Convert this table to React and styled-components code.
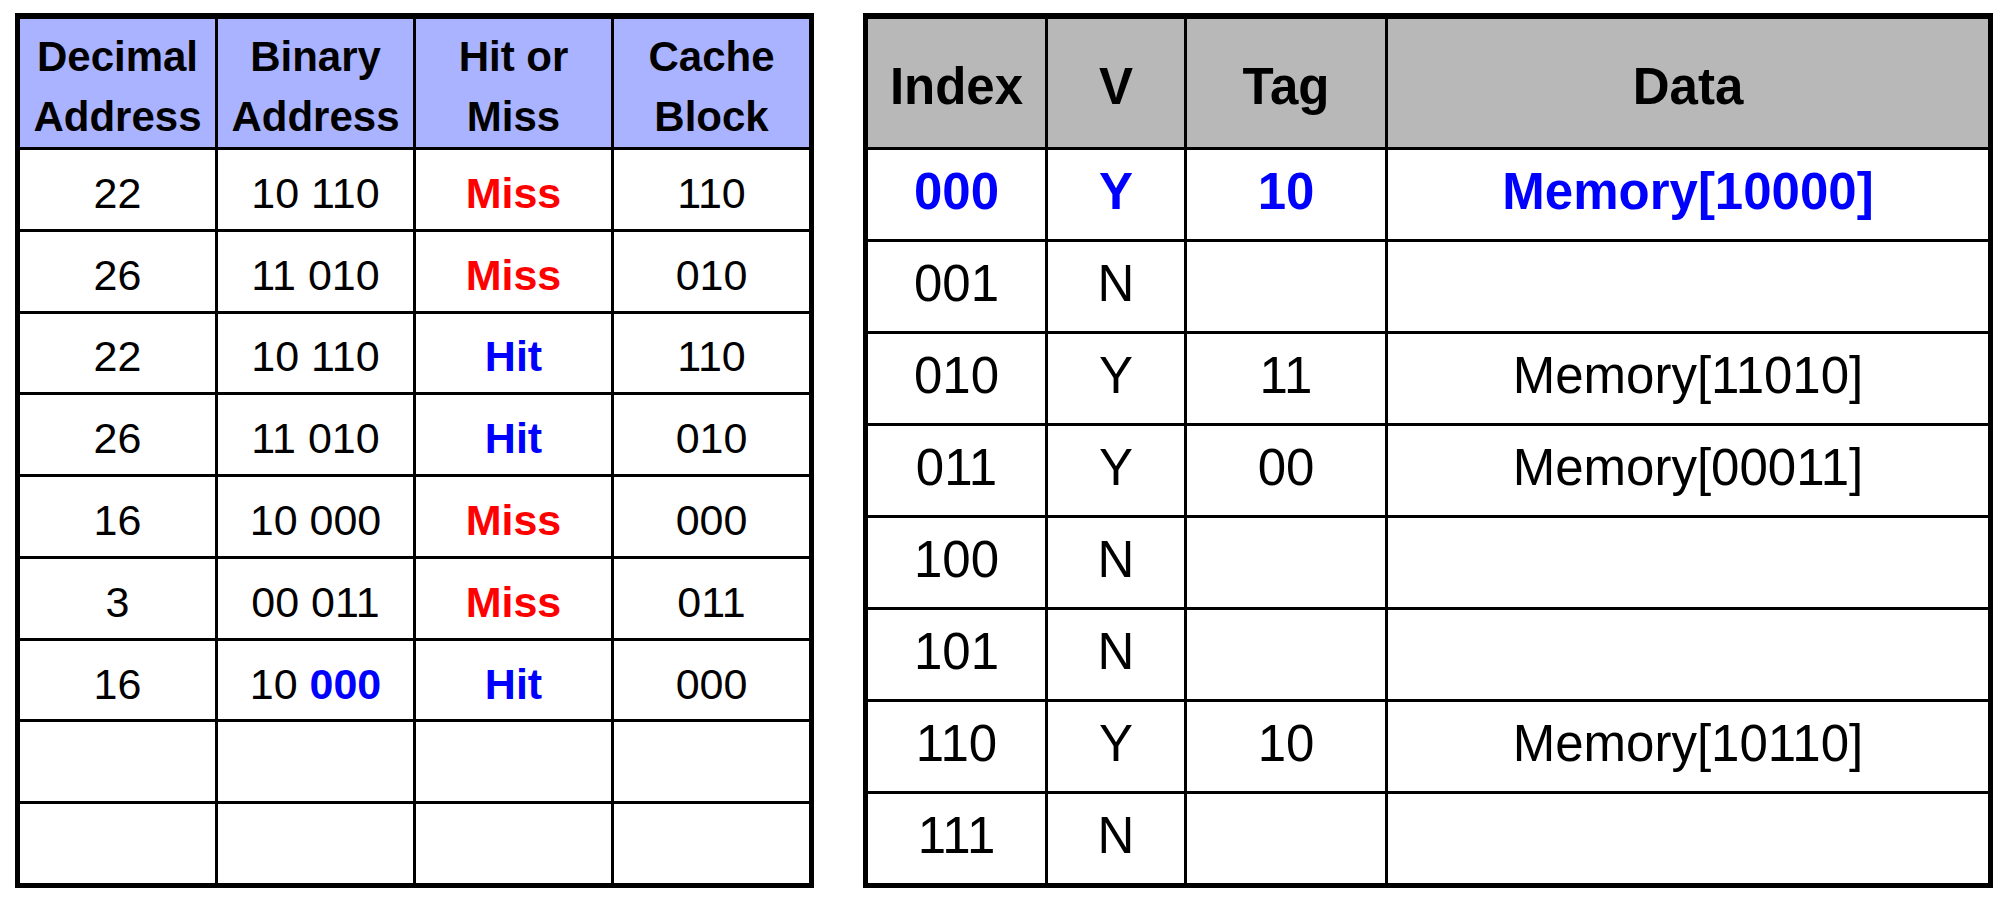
import React from "react";
import styled, { createGlobalStyle } from "styled-components";

const GlobalStyle = createGlobalStyle`
  html, body {
    margin: 0;
    padding: 0;
    background: #ffffff;
    font-family: "Liberation Sans", Arial, sans-serif;
  }
`;

const Page = styled.main`
  display: flex;
  align-items: flex-start;
  gap: 49px;
  padding: 13px 0 0 15px;
`;

const Grid = styled.div`
  display: grid;
  grid-template-columns: ${(p) => p.$cols};
  grid-template-rows: 128px repeat(${(p) => p.$rowCount}, 1fr);
  gap: 3px;
  width: ${(p) => p.$width}px;
  height: 875px;
  box-sizing: border-box;
  border: 5px solid #000;
  border-top-width: 6px;
  background: #000;
`;

const HeadCell = styled.div`
  display: flex;
  align-items: center;
  justify-content: center;
  text-align: center;
  background: ${(p) => p.$bg};
  color: #000;
  font-weight: 700;
  font-size: ${(p) => p.$size}px;
  line-height: ${(p) => p.$lh}px;
  padding-top: ${(p) => p.$shift || 0}px;
  box-sizing: border-box;
`;

const Cell = styled.div`
  display: flex;
  align-items: center;
  justify-content: center;
  background: #fff;
  color: ${(p) => p.$color || "#000"};
  font-weight: ${(p) => (p.$bold ? 700 : 400)};
  font-size: ${(p) => p.$size}px;
  white-space: pre;
  padding-top: ${(p) => p.$padTop || 0}px;
  padding-bottom: ${(p) => p.$padBottom || 0}px;
  box-sizing: border-box;
`;

const Accent = styled.span`
  color: #0000ff;
  font-weight: 700;
`;

const RED = "#ff0000";
const BLUE = "#0000ff";

const accessRows = [
  { dec: "22", bin: "10 110", res: "Miss", block: "110" },
  { dec: "26", bin: "11 010", res: "Miss", block: "010" },
  { dec: "22", bin: "10 110", res: "Hit", block: "110" },
  { dec: "26", bin: "11 010", res: "Hit", block: "010" },
  { dec: "16", bin: "10 000", res: "Miss", block: "000" },
  { dec: "3", bin: "00 011", res: "Miss", block: "011" },
  { dec: "16", bin: ["10 ", "000"], res: "Hit", block: "000" },
  null,
  null,
];

const cacheRows = [
  { idx: "000", v: "Y", tag: "10", data: "Memory[10000]", hl: true },
  { idx: "001", v: "N", tag: "", data: "" },
  { idx: "010", v: "Y", tag: "11", data: "Memory[11010]" },
  { idx: "011", v: "Y", tag: "00", data: "Memory[00011]" },
  { idx: "100", v: "N", tag: "", data: "" },
  { idx: "101", v: "N", tag: "", data: "" },
  { idx: "110", v: "Y", tag: "10", data: "Memory[10110]" },
  { idx: "111", v: "N", tag: "", data: "" },
];

const LEFT_HEAD_SIZE = 42;
const LEFT_SIZE = 43;
const RIGHT_SIZE = 51;

function AccessTable() {
  const heads = [
    ["Decimal", "Address"],
    ["Binary", "Address"],
    ["Hit or", "Miss"],
    ["Cache", "Block"],
  ];
  return (
    <Grid $cols="repeat(4, 1fr)" $rowCount={9} $width={799}>
      {heads.map((h, i) => (
        <HeadCell key={i} $bg="#aab3ff" $size={LEFT_HEAD_SIZE} $lh={60} $shift={7}>
          {h[0]}
          <br />
          {h[1]}
        </HeadCell>
      ))}
      {accessRows.map((r, i) =>
        r ? (
          <React.Fragment key={i}>
            <Cell $size={LEFT_SIZE} $padTop={8}>{r.dec}</Cell>
            <Cell $size={LEFT_SIZE} $padTop={8}>
              {Array.isArray(r.bin) ? (
                <>
                  {r.bin[0]}
                  <Accent>{r.bin[1]}</Accent>
                </>
              ) : (
                r.bin
              )}
            </Cell>
            <Cell
              $size={LEFT_SIZE}
              $padTop={8}
              $bold
              $color={r.res === "Miss" ? RED : BLUE}
            >
              {r.res}
            </Cell>
            <Cell $size={LEFT_SIZE} $padTop={8}>{r.block}</Cell>
          </React.Fragment>
        ) : (
          <React.Fragment key={i}>
            <Cell $size={LEFT_SIZE} />
            <Cell $size={LEFT_SIZE} />
            <Cell $size={LEFT_SIZE} />
            <Cell $size={LEFT_SIZE} />
          </React.Fragment>
        )
      )}
    </Grid>
  );
}

function CacheTable() {
  const heads = ["Index", "V", "Tag", "Data"];
  return (
    <Grid $cols="177px 136px 198px 1fr" $rowCount={8} $width={1130}>
      {heads.map((h) => (
        <HeadCell key={h} $bg="#b8b8b8" $size={RIGHT_SIZE} $lh={60} $shift={8}>
          {h}
        </HeadCell>
      ))}
      {cacheRows.map((r) => {
        const c = r.hl ? BLUE : "#000";
        return (
          <React.Fragment key={r.idx}>
            <Cell $size={RIGHT_SIZE} $padBottom={6} $bold={r.hl} $color={c}>{r.idx}</Cell>
            <Cell $size={RIGHT_SIZE} $padBottom={6} $bold={r.hl} $color={c}>{r.v}</Cell>
            <Cell $size={RIGHT_SIZE} $padBottom={6} $bold={r.hl} $color={c}>{r.tag}</Cell>
            <Cell $size={RIGHT_SIZE} $padBottom={6} $bold={r.hl} $color={c}>{r.data}</Cell>
          </React.Fragment>
        );
      })}
    </Grid>
  );
}

export default function App() {
  return (
    <>
      <GlobalStyle />
      <Page>
        <AccessTable />
        <CacheTable />
      </Page>
    </>
  );
}
